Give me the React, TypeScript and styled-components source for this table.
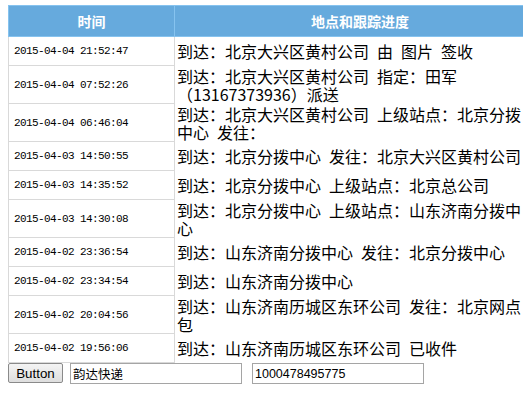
import styled, { createGlobalStyle } from 'styled-components';

const GlobalStyle = createGlobalStyle`
  body {
    margin: 5px 8px;
    background: #ffffff;
    font-family: "Noto Sans CJK SC", "Liberation Sans", sans-serif;
  }
`;

const TrackTable = styled.table`
  width: 520px;
  border-collapse: collapse;
  border-spacing: 0;
  table-layout: fixed;
`;

const HeadCell = styled.th<{ $shift?: number }>`
  height: 30px;
  padding: 0 0 0 ${(p) => p.$shift ?? 0}px;
  background: #66aadd;
  border: 1px solid #86c3ef;
  color: #ffffff;
  font-size: 14px;
  font-weight: bold;
  text-align: center;
  font-family: "Noto Sans CJK SC", sans-serif;
`;

const TimeCell = styled.td`
  width: 160px;
  height: 28px;
  padding: 0 0 0 5px;
  border: 1px solid #d9d9d9;
  background: #ffffff;
  font-family: "Liberation Mono", monospace;
  font-size: 11px;
  letter-spacing: -0.6px;
  color: #000;
  vertical-align: middle;
  white-space: nowrap;
`;

const PlaceCell = styled.td`
  padding: 1px 0 1px 2px;
  border: none;
  font-size: 16px;
  line-height: 18px;
  word-spacing: 4.4px;
  color: #000;
  vertical-align: middle;
`;

const Toolbar = styled.div`
  display: flex;
  align-items: flex-start;
  height: 21px;
`;

const Button = styled.button`
  width: 55px;
  height: 20px;
  margin-right: 7px;
  padding: 0;
  border: 1px solid #8a8a8a;
  border-radius: 2px;
  background: linear-gradient(#f4f4f4, #dedede);
  font-family: "Liberation Sans", Arial, sans-serif;
  font-size: 13.33px;
  color: #000;
`;

const TextBox = styled.input<{ $gap?: number }>`
  box-sizing: border-box;
  width: 172px;
  height: 21px;
  margin: 0 ${(p) => p.$gap ?? 0}px 0 0;
  padding: 0 2px;
  border: 1px solid #a5a5a5;
  font-family: "Liberation Sans", "Noto Sans CJK SC", sans-serif;
  font-size: 12.5px;
  color: #000;
  outline: none;
`;

const rows: [string, string][] = [
  ['2015-04-04 21:52:47', '到达：北京大兴区黄村公司 由 图片 签收'],
  ['2015-04-04 07:52:26', '到达：北京大兴区黄村公司 指定：田军（13167373936）派送'],
  ['2015-04-04 06:46:04', '到达：北京大兴区黄村公司 上级站点：北京分拨中心 发往：'],
  ['2015-04-03 14:50:55', '到达：北京分拨中心 发往：北京大兴区黄村公司'],
  ['2015-04-03 14:35:52', '到达：北京分拨中心 上级站点：北京总公司'],
  ['2015-04-03 14:30:08', '到达：北京分拨中心 上级站点：山东济南分拨中心'],
  ['2015-04-02 23:36:54', '到达：山东济南分拨中心 发往：北京分拨中心'],
  ['2015-04-02 23:34:54', '到达：山东济南分拨中心'],
  ['2015-04-02 20:04:56', '到达：山东济南历城区东环公司 发往：北京网点包'],
  ['2015-04-02 19:56:06', '到达：山东济南历城区东环公司 已收件'],
];

function App() {
  return (
    <>
      <GlobalStyle />
      <TrackTable>
        <thead>
          <tr>
            <HeadCell style={{ width: 165 }}>时间</HeadCell>
            <HeadCell $shift={18}>地点和跟踪进度</HeadCell>
          </tr>
        </thead>
        <tbody>
          {rows.map(([time, place]) => (
            <tr key={time}>
              <TimeCell>{time}</TimeCell>
              <PlaceCell>{place}</PlaceCell>
            </tr>
          ))}
        </tbody>
      </TrackTable>
      <Toolbar>
        <Button>Button</Button>
        <TextBox $gap={10} defaultValue="韵达快递" />
        <TextBox defaultValue="1000478495775" />
      </Toolbar>
    </>
  );
}

export default App;
